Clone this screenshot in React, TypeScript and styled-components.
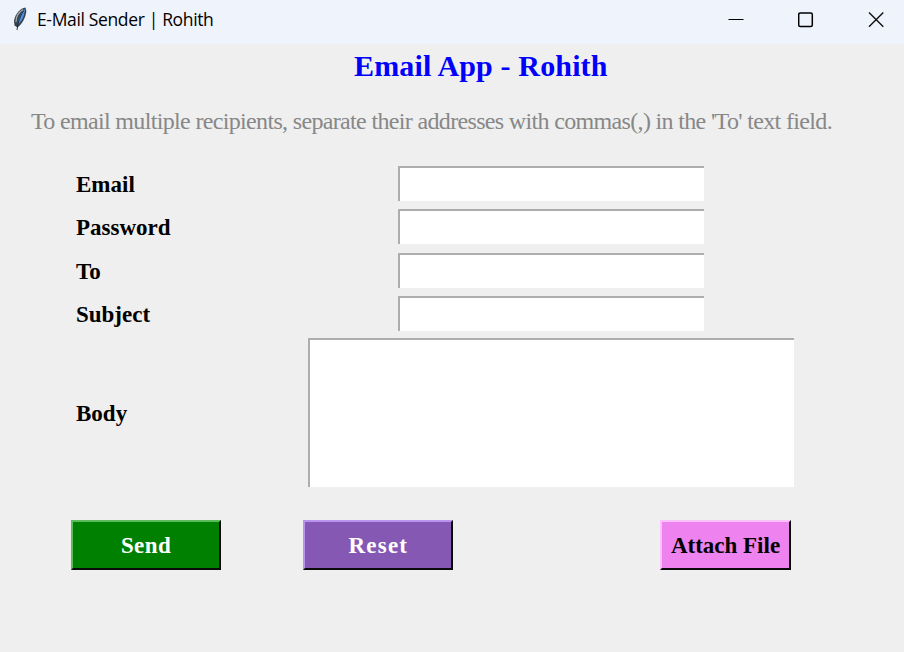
import React from "react";
import styled, { createGlobalStyle } from "styled-components";

const GlobalStyle = createGlobalStyle`
  * { box-sizing: border-box; }
  body { margin: 0; background: #efefef; overflow: hidden; }
`;

const Window = styled.div`
  width: 904px;
  height: 652px;
  background: #efefef;
  font-family: "Liberation Serif", "Times New Roman", serif;
  color: #000;
  display: flex;
  flex-direction: column;
`;

const TitleBar = styled.header`
  height: 44px;
  flex: none;
  background: #eff3fb;
  display: flex;
  align-items: flex-start;
  padding-left: 11px;
`;

const Feather = styled.svg`
  width: 18px;
  height: 26px;
  margin-top: 6px;
`;

const WindowTitle = styled.span`
  margin-left: 8px;
  flex: 1;
  font: 17.5px/39px "Open Sans", "Noto Sans", sans-serif;
  letter-spacing: -0.35px;
  white-space: nowrap;
`;

const WindowButton = styled.button`
  width: 56px;
  height: 40px;
  padding: 0;
  border: 0;
  background: none;
  display: grid;
  place-items: center;
`;

const WindowButtons = styled.div`
  display: flex;
  gap: 14px;
`;

const Heading = styled.h1`
  margin: 5px 0 0 354px;
  height: 34px;
  font-size: 30px;
  line-height: 34px;
  letter-spacing: 0.15px;
  white-space: nowrap;
  color: #0000fb;
`;

const Hint = styled.p`
  margin: 23px 0 0 31px;
  height: 30px;
  font-size: 24px;
  line-height: 30px;
  letter-spacing: -0.66px;
  white-space: nowrap;
  color: #878787;
`;

const Form = styled.form`
  display: flex;
  flex-direction: column;
`;

const Fields = styled.div`
  margin-top: 30px;
  padding-left: 76px;
  display: grid;
  grid-template-columns: 232px 486px;
  grid-template-rows: repeat(3, 43.4px) 42px 149px;
  align-items: start;
`;

const Label = styled.label<{ $middle?: boolean }>`
  font-size: 23px;
  line-height: 37px;
  font-weight: bold;
  align-self: ${(p) => (p.$middle ? "center" : "start")};
  padding-top: ${(p) => (p.$middle ? 2 : 0)}px;
`;

const fieldFrame = `
  border: 0 solid #adadad;
  border-width: 2px 0 0 2px;
  border-radius: 0;
  background: #fff;
  outline: 0;
  padding: 2px 4px;
  font: 22px "Liberation Serif", serif;
`;

const Entry = styled.input`
  ${fieldFrame}
  width: 306px;
  height: 35px;
  justify-self: center;
`;

const BodyText = styled.textarea`
  ${fieldFrame}
  width: 486px;
  height: 149px;
  resize: none;
  display: block;
`;

const Actions = styled.div`
  margin: 33px 0 0 71px;
  width: 720px;
  display: grid;
  grid-template-columns: 232.4px 356.6px 131px;
`;

const ActionButton = styled.button<{
  $bg: string;
  $light: string;
  $fg: string;
  $width: number;
  $spacing: number;
}>`
  width: ${(p) => p.$width}px;
  height: 50px;
  padding: 1px 0 0;
  border: 2px solid #0a0a0a;
  border-top-color: ${(p) => p.$light};
  border-left-color: ${(p) => p.$light};
  border-radius: 0;
  background: ${(p) => p.$bg};
  color: ${(p) => p.$fg};
  font: bold 23px/45px "Liberation Serif", serif;
  letter-spacing: ${(p) => p.$spacing}px;
  white-space: nowrap;
`;

const rows = [
  { name: "Email", type: "text" },
  { name: "Password", type: "password" },
  { name: "To", type: "text" },
  { name: "Subject", type: "text" },
];

export default function App() {
  return (
    <Window>
      <GlobalStyle />
      <TitleBar>
        <Feather viewBox="0 0 18 26">
          <path d="M14.500 1.500C9.500 2 4.500 7.500 3 14.500L3.500 19.500L6.500 21.500C11 18 14.800 12 15.300 5Z" fill="#35414e" />
          <path d="M14 3C10.500 6 7.500 11 6.500 19C11 15 13.500 10 14 3Z" fill="#4e93dc" />
          <path d="M12 3.500C8 6 5 11 5 16" fill="none" stroke="#a4a8ac" strokeWidth="1.300" />
          <path d="M12.500 5C9 10 7 16 6 24" fill="none" stroke="#17212c" strokeWidth="0.900" />
        </Feather>
        <WindowTitle>E-Mail Sender | Rohith</WindowTitle>
        <WindowButtons>
          <WindowButton type="button" aria-label="Minimize">
            <svg width="16" height="16"><path d="M0.500 7.500H15.500" stroke="#000" /></svg>
          </WindowButton>
          <WindowButton type="button" aria-label="Maximize">
            <svg width="16" height="16"><rect x="0.700" y="0.900" width="13.600" height="13.600" rx="1.500" fill="none" stroke="#000" strokeWidth="1.500" /></svg>
          </WindowButton>
          <WindowButton type="button" aria-label="Close">
            <svg width="16" height="16"><path d="M1 0.500L15.300 14.800M15.300 0.500L1 14.800" stroke="#111" strokeWidth="1.400" /></svg>
          </WindowButton>
        </WindowButtons>
      </TitleBar>
      <Heading>Email App - Rohith</Heading>
      <Hint>To email multiple recipients, separate their addresses with commas(,) in the 'To' text field.</Hint>
      <Form>
        <Fields>
          {rows.map((row) => (
            <React.Fragment key={row.name}>
              <Label htmlFor={row.name}>{row.name}</Label>
              <Entry id={row.name} type={row.type} />
            </React.Fragment>
          ))}
          <Label htmlFor="Body" $middle>Body</Label>
          <BodyText id="Body" />
        </Fields>
        <Actions>
          <ActionButton type="button" $bg="#008000" $light="#5cbc5c" $fg="#fff" $width={150} $spacing={0.4}>Send</ActionButton>
          <ActionButton type="button" $bg="#8558b3" $light="#b894ee" $fg="#fff" $width={150} $spacing={1.2}>Reset</ActionButton>
          <ActionButton type="button" $bg="#ee82ee" $light="#ffc0ff" $fg="#000" $width={131} $spacing={0}>Attach File</ActionButton>
        </Actions>
      </Form>
    </Window>
  );
}
